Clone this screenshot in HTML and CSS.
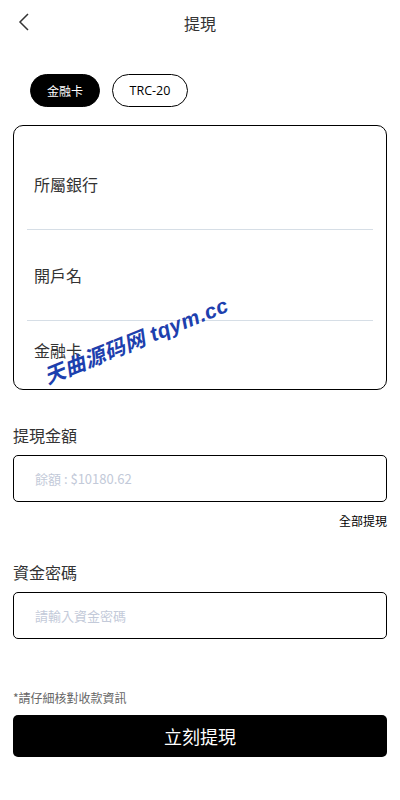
FILE: index.html
```html
<!DOCTYPE html>
<html lang="zh-Hant">
<head>
<meta charset="utf-8">
<link rel="stylesheet" href="styles.css">
</head>
<body>
<div class="page">
  <header class="topbar">
    <svg class="back" width="12" height="18" viewBox="0 0 12 18"><path d="M10 1 L2 9 L10 17" fill="none" stroke="#333" stroke-width="1.5"/></svg>
    <div class="title">提現</div>
  </header>
  <div class="tabs">
    <div class="tab active">金融卡</div>
    <div class="tab latin">TRC-20</div>
  </div>
  <div class="card">
    <div class="row first">所屬銀行</div>
    <div class="row">開戶名</div>
    <div class="row last">金融卡</div>
  </div>
  <div class="label">提現金額</div>
  <div class="input"><span class="ph">餘額 : $10180.62</span></div>
  <div class="all">全部提現</div>
  <div class="label second">資金密碼</div>
  <div class="input"><span class="ph">請輸入資金密碼</span></div>
  <div class="note">*請仔細核對收款資訊</div>
  <div class="btn">立刻提現</div>
  <div class="watermark">天曲源码网 tqym.cc</div>
</div>
</body>
</html>
```
FILE: styles.css
```css
* { box-sizing: border-box; }
html, body { margin: 0; padding: 0; background: #fff; }
body { font-family: "Noto Sans CJK TC", "Noto Sans", sans-serif; color: #333; }
.page { position: relative; width: 400px; height: 800px; padding: 0 13px; }
.topbar { position: relative; height: 46px; display: flex; align-items: center; justify-content: center; }
.back { position: absolute; left: 5px; top: 13px; }
.title { font-size: 16px; color: #333; line-height: 1; margin-top: -1px; }
.tabs { display: flex; gap: 12px; padding: 28px 0 0 17px; }
.tab { height: 33px; padding: 0 16px; border: 1px solid #000; border-radius: 17px; font-size: 12px; display: flex; align-items: center; justify-content: center; color: #000; min-width: 70px; }
.tab.latin { min-width: 76px; font-family: "Open Sans", "Noto Sans CJK TC", sans-serif; font-size: 12.5px; }
.tab.active { background: #000; color: #fff; }
.card { margin-top: 18px; height: 265px; border: 1px solid #000; border-radius: 10px; padding: 0 13px; overflow: hidden; }
.row { height: 91px; display: flex; align-items: center; padding-left: 7px; font-size: 16px; color: #333; border-bottom: 1px solid #d6dee6; }
.row.first { height: 104px; padding-top: 12px; }
.row.last { border-bottom: none; height: 60px; padding-top: 0; padding-bottom: 2px; }
.label { font-size: 16px; color: #333; margin-top: 34px; line-height: 22px; }
.label.second { margin-top: 31px; }
.input { margin-top: 9px; height: 47px; border: 1px solid #000; border-radius: 5px; display: flex; align-items: center; padding-left: 21px; }
.ph { font-size: 13px; color: #c3cad9; }
.all { text-align: right; font-size: 12px; color: #000; margin-top: 10px; line-height: 18px; }
.note { font-size: 12px; color: #666; margin-top: 51px; line-height: 16px; }
.btn { margin-top: 9px; height: 42px; background: #000; color: #fff; border-radius: 5px; display: flex; align-items: center; justify-content: center; font-size: 18px; }
.watermark { position: absolute; left: 50px; top: 360px; font-family: "Liberation Sans", "Noto Sans CJK SC", sans-serif; font-weight: bold; font-style: italic; font-size: 21px; letter-spacing: 0.5px; color: #1d3fae; transform: rotate(-22deg); transform-origin: left bottom; white-space: nowrap; }
```
